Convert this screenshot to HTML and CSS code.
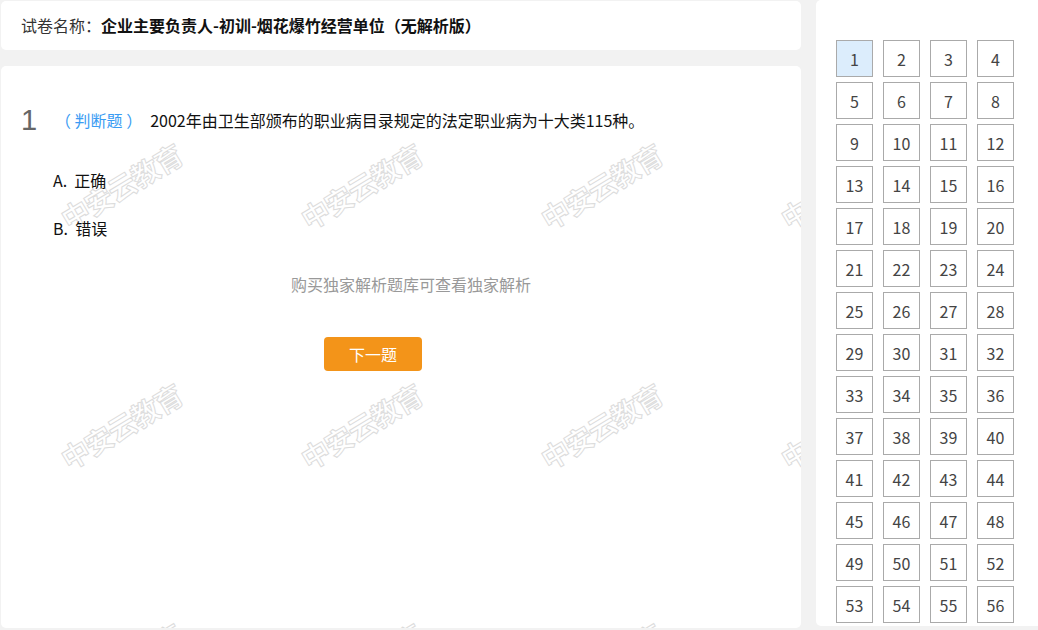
FILE: index.html
```html
<!DOCTYPE html>
<html lang="zh-CN">
<head>
    <meta charset="UTF-8">
    <meta name="viewport" content="width=device-width, initial-scale=1.0">
    <title>试卷</title>
    <link rel="stylesheet" href="styles.css">
</head>
<body>
    <div class="left-col">
        <div class="paper-title">
            试卷名称：<b>企业主要负责人-初训-烟花爆竹经营单位（无解析版）</b>
        </div>
        <div class="question-card">
            <div class="watermark">
                <span>中安云教育</span><span>中安云教育</span><span>中安云教育</span><span>中安云教育</span>
                <span>中安云教育</span><span>中安云教育</span><span>中安云教育</span><span>中安云教育</span>
                <span>中安云教育</span><span>中安云教育</span><span>中安云教育</span><span>中安云教育</span>
            </div>
            <div class="question-body">
                <div class="question-line">
                    <span class="q-num">1</span>
                    <span class="q-type">（ 判断题 ）</span>
                    <span class="q-text">2002年由卫生部颁布的职业病目录规定的法定职业病为十大类115种。</span>
                </div>
                <ul class="options">
                    <li>A.&nbsp;&nbsp;正确</li>
                    <li>B.&nbsp;&nbsp;错误</li>
                </ul>
                <p class="tip">购买独家解析题库可查看独家解析</p>
                <button class="next-btn">下一题</button>
            </div>
        </div>
    </div>
    <div class="answer-card">
        <ul class="num-grid" id="numGrid"></ul>
    </div>
    <script>
        var grid = document.getElementById('numGrid');
        for (var i = 1; i <= 56; i++) {
            var li = document.createElement('li');
            li.textContent = i;
            if (i === 1) li.className = 'current';
            grid.appendChild(li);
        }
    </script>
</body>
</html>
```

FILE: styles.css
```css
html {
    overflow: hidden;
}
body {
    margin: 0;
    padding: 0 0 0 1px;
    background-color: #f2f2f2;
    font-family: "Microsoft YaHei", "Noto Sans CJK SC", sans-serif;
    color: #333;
    display: flex;
    align-items: flex-start;
    height: 630px;
    overflow: hidden;
}
.left-col {
    flex-shrink: 0;
    width: 800px;
    margin-top: 1px;
}
.paper-title {
    background-color: #fff;
    border-radius: 5px;
    height: 49px;
    line-height: 49px;
    padding-left: 20px;
    font-size: 16px;
    color: #333;
}
.paper-title b {
    color: #111;
}
.question-card {
    position: relative;
    overflow: hidden;
    margin-top: 16px;
    height: 562px;
    background-color: #fff;
    border-radius: 5px;
}
.watermark {
    position: absolute;
    top: 0;
    left: 0;
    width: 960px;
    display: grid;
    grid-template-columns: repeat(4, 240px);
    grid-auto-rows: 240px;
    pointer-events: none;
}
.watermark span {
    display: flex;
    align-items: center;
    justify-content: center;
    transform: rotate(-31deg);
    font-size: 28px;
    font-weight: bold;
    color: #fff;
    -webkit-text-stroke: 1px #dcdcdc;
    letter-spacing: -1px;
}
.question-body {
    position: relative;
    padding: 39px 0 0 20px;
}
.question-line {
    display: flex;
    align-items: center;
    height: 30px;
    font-size: 16px;
}
.q-num {
    font-family: "Liberation Sans", Arial, sans-serif;
    font-size: 29px;
    color: #666;
    width: 34px;
}
.q-type {
    color: #3a9cf3;
    margin-right: 8px;
}
.q-text {
    color: #111;
}
.options {
    list-style-type: none;
    margin: 33px 0 0 32px;
    padding: 0;
}
.options li {
    line-height: 24px;
    font-size: 16px;
    color: #111;
    margin-bottom: 24px;
}
.options li:last-child {
    margin-bottom: 0;
}
.tip {
    margin: 32px 0 0;
    text-align: center;
    line-height: 24px;
    font-size: 16px;
    color: #999;
}
.next-btn {
    display: block;
    margin: 41px 0 0 303px;
    width: 98px;
    height: 34px;
    border: none;
    border-radius: 4px;
    background-color: #f39419;
    color: #fff;
    font-family: inherit;
    font-size: 16px;
    cursor: pointer;
}
.answer-card {
    flex-shrink: 0;
    margin-left: 15px;
    width: 240px;
    height: 626px;
    background-color: #fff;
    border-radius: 5px;
    padding: 40px 0 0 20px;
    box-sizing: border-box;
}
.num-grid {
    list-style-type: none;
    margin: 0;
    padding: 0;
    display: grid;
    grid-template-columns: repeat(4, 37px);
    grid-auto-rows: 37px;
    column-gap: 10px;
    row-gap: 5px;
}
.num-grid li {
    border: 1px solid #aaa;
    display: flex;
    align-items: center;
    justify-content: center;
    font-size: 16px;
    color: #444;
}
.num-grid li.current {
    background-color: #dcedfc;
}
```
